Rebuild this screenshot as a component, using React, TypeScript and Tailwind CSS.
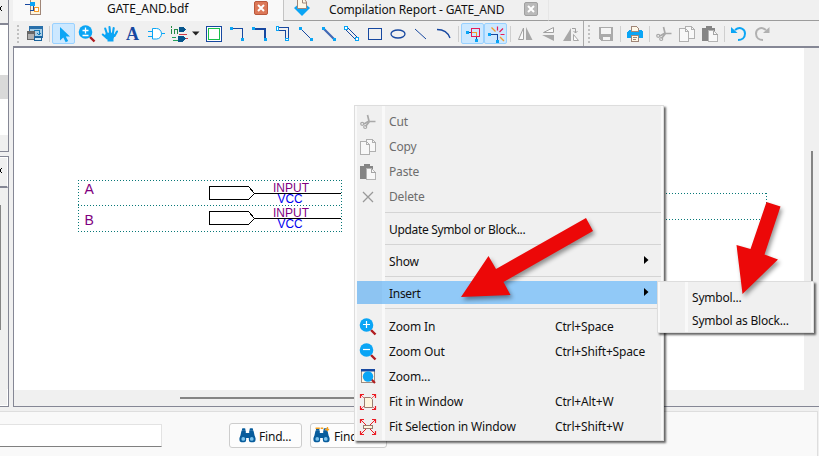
import type { ReactNode } from 'react';

const BLUE = '#0aa5f5';
const NAVY = '#1748a0';

function Icon({ children, crisp = true, className = 'h-5 w-5' }: { children: ReactNode; crisp?: boolean; className?: string }) {
  return (
    <svg viewBox="0 0 20 20" className={`${className} shrink-0`} fill="none" shapeRendering={crisp ? 'crispEdges' : 'auto'}>
      {children}
    </svg>
  );
}

function Cell({ children, active = false }: { children: ReactNode; active?: boolean }) {
  return (
    <div className={`flex h-[21px] w-[23px] shrink-0 items-center justify-center ${active ? 'rounded-[2px] border border-[#99d1ff] bg-[#cce8ff]' : ''}`}>
      {children}
    </div>
  );
}

function Sep() {
  return (
    <div className="flex w-[6px] shrink-0 justify-center">
      <div className="h-4 w-px bg-[#cfcfcf]" />
    </div>
  );
}

function Dots() {
  return (
    <svg viewBox="0 0 3 20" className="h-5 w-[3px] shrink-0" shapeRendering="crispEdges">
      {[1, 5, 9, 13, 17].map((y) => (
        <rect key={y} x="0" y={y} width="2" height="2" fill="#c0c0c0" />
      ))}
    </svg>
  );
}

function Magnifier({ sign }: { sign: string }) {
  return (
    <Icon crisp={false}>
      <path d="M13 13 17.500 17.500" stroke="#b01c20" strokeWidth="2.400" />
      <circle cx="8.500" cy="8" r="6.800" fill={BLUE} />
      {sign === '+' && <path d="M5 7.500h7M8.500 4v7" stroke="#fff" strokeWidth="1.200" />}
      {sign === '-' && <path d="M5 7.500h7" stroke="#fff" strokeWidth="1.200" />}
      {sign === '±' && <path d="M5.500 6.500h6M8.500 3.500v6M5.500 11.500h6" stroke="#fff" strokeWidth="1.300" />}
    </Icon>
  );
}

function Scissors() {
  return (
    <Icon crisp={false}>
      <path d="m9.500 3 1.500 6-5 3M17.500 9.500h-6L7.500 14.500" stroke="#a9a9a9" strokeWidth="1.700" />
      <circle cx="4.200" cy="11.800" r="1.500" stroke="#a9a9a9" strokeWidth="1.200" />
      <circle cx="7.200" cy="15" r="1.500" stroke="#a9a9a9" strokeWidth="1.200" />
    </Icon>
  );
}

function CopyIcon() {
  return (
    <Icon>
      <path d="M8.500 2.500h6l3 3v9h-9z" fill="#f8f8f8" stroke="#b0b0b0" />
      <path d="M2.500 4.500h6l3 3v10h-9z" fill="#f8f8f8" stroke="#b0b0b0" />
      <path d="M8.500 4.500v3h3M14.500 2.500v3h3" stroke="#b0b0b0" />
    </Icon>
  );
}

function PasteIcon() {
  return (
    <Icon>
      <path d="M2 4h4V2h6v2h3v13H2z" fill="#858585" />
      <path d="M8.500 6.500h5l4 4v7h-9z" fill="#f8f8f8" stroke="#b4b4b4" />
      <path d="M13.500 6.500v4h4" stroke="#a5a5a5" />
    </Icon>
  );
}

function FitIcon({ small = false }: { small?: boolean }) {
  return (
    <Icon crisp={false}>
      <path d="m2.500 2.500 4 4M17.500 2.500l-4 4M2.500 17.500l4-4M17.500 17.500l-4-4" stroke="#ec1c24" strokeDasharray={small ? undefined : '3 1'} />
      <path d="M2.500 6V2.500H6M14 2.500h3.500V6M2.500 14v3.500H6M14 17.500h3.500V14" stroke="#ec1c24" strokeWidth="1.200" />
      {small ? (
        <>
          <path d="m5 5 3 3M15 5l-3 3M5 15l3-3M15 15l-3-3" stroke="#ec1c24" />
          <rect x="5.500" y="8.500" width="9" height="3" fill="#fff8e0" stroke="#9a7c70" />
        </>
      ) : (
        <path d="M6.500 5.500h6l2 2v8h-8z" fill="#fff5dc" stroke="#9a7c70" />
      )}
    </Icon>
  );
}

function ZoomAreaIcon() {
  return (
    <Icon crisp={false}>
      <rect x="3.500" y="3.500" width="13" height="12" fill="#fff8e8" stroke="#a08c80" />
      <rect x="3" y="2" width="14" height="2.500" fill="#1748a0" />
      <path d="m13 12 4 4" stroke="#b01c20" strokeWidth="2.200" />
      <circle cx="10" cy="9.500" r="5.200" fill={BLUE} />
    </Icon>
  );
}

function Binoculars({ spark = false }: { spark?: boolean }) {
  return (
    <Icon crisp={false} className="h-[17px] w-[17px]">
      <path d="M3 4h5v3h4V4h5l2 9v4h-7v-4H8v4H1v-4z" fill="#075c9c" />
      <circle cx="4.500" cy="14" r="4" fill="#075c9c" />
      <circle cx="15.500" cy="14" r="4" fill="#075c9c" />
      <rect x="3.500" y="1.500" width="4" height="3" rx="1" fill="#075c9c" />
      <rect x="12.500" y="1.500" width="4" height="3" rx="1" fill="#075c9c" />
      <circle cx="5" cy="14" r="2.200" fill="#7cc4ee" />
      <circle cx="15" cy="14" r="2.200" fill="#7cc4ee" />
      {spark && <path d="M3 1.500h9M14 3h6M17 0v6" stroke="#f5a020" strokeWidth="1.600" strokeDasharray="5 1" />}
    </Icon>
  );
}

function Toolbar() {
  return (
    <div className="flex h-[25px] shrink-0 items-center bg-[#f0f0f0] pl-1">
      <Dots />
      <div className="w-[3px]" />
      <Cell>
        <Icon>
          <rect x="4" y="2" width="14" height="12" fill="#2a70aa" />
          <rect x="5" y="5" width="12" height="8" fill="#a9cfe6" />
          <rect x="2" y="7" width="8" height="9" fill="#666" />
          <rect x="3" y="10" width="6" height="5" fill="#b0b0b0" />
          <path d="M9 6.500h5v4M12 9l2 2 2-2" stroke="#167bb5" />
          <rect x="9" y="12" width="8" height="5" fill="#1b639c" />
          <rect x="10" y="14" width="6" height="2" fill="#d4edf8" />
        </Icon>
      </Cell>
      <Sep />
      <Cell active>
        <Icon crisp={false}>
          <path d="M6 3v13.500l3.300-3 2.400 4.700 2.500-1.200-2.400-4.500h4.200z" fill={BLUE} />
        </Icon>
      </Cell>
      <Cell><Magnifier sign="±" /></Cell>
      <Cell>
        <Icon crisp={false}>
          <path d="M5.200 4.500 7 10M9.500 3l.7 7M13.700 4l-.9 6M17 7.500 14.500 12M2.800 10.500l4.500 4" stroke={BLUE} strokeWidth="2.100" strokeLinecap="round" />
          <path d="M6 9c3-1 6-1 9 1.500L13.500 15v2.500h-6V15L4.500 12z" fill={BLUE} />
        </Icon>
      </Cell>
      <Cell>
        <span className="mt-px font-['Liberation_Serif',serif] text-[18px] leading-none font-bold text-[#1748a0]">A</span>
      </Cell>
      <Cell>
        <Icon>
          <path d="M2 7.500h5M2 12.500h5M15 9.500h4" stroke={BLUE} />
          <path d="M6.500 4.500h4c3 0 5 2.500 5 5.250s-2 5.250-5 5.250h-4z" stroke={BLUE} fill="#fff" shapeRendering="auto" />
        </Icon>
      </Cell>
      <Cell>
        <Icon>
          <path d="M2.500 5v5M2.500 2v2M5.500 10V5.500h3V10" stroke="#238a45" />
          <path d="M10 3h4l3 2-3 3h-4zM9 12h5l3 2.500-3 3H9z" fill="#07558c" />
          <path d="M3 13.500h4M4 16.500h5" stroke="#23a05a" />
          <path d="M10 10.500h8M17 14.500h2" stroke="#d63c48" />
        </Icon>
      </Cell>
      <svg viewBox="0 0 12 8" className="h-2 w-3 shrink-0"><path d="M2 1.500h7.500L5.750 5.500z" fill="#222" /></svg>
      <Cell>
        <Icon>
          <rect x="2.500" y="2.500" width="15" height="15" fill="#fff" stroke={NAVY} />
          <rect x="4.500" y="4.500" width="11" height="11" stroke="#18c048" />
        </Icon>
      </Cell>
      <Cell>
        <Icon>
          <path d="M4 4.500h11.500V16" stroke={NAVY} />
          <path d="M3 3h3v3H3zM14 14h3v3h-3z" fill={BLUE} />
        </Icon>
      </Cell>
      <Cell>
        <Icon>
          <path d="M4 5h11v11" stroke={NAVY} strokeWidth="2" />
          <path d="M2 3h3v3H2zM14 14h3v3h-3z" fill={BLUE} />
        </Icon>
      </Cell>
      <Cell>
        <Icon>
          <path d="M5 3.500h10.500V14M5 6.500h7.500V15" stroke={NAVY} />
          <path d="M3.500 2.500h2v4h-2zM12.500 14.500h3v2h-3z" stroke={BLUE} fill="#fff" />
        </Icon>
      </Cell>
      <Cell>
        <Icon>
          <path d="m4 4 11 11" stroke={NAVY} shapeRendering="auto" />
          <path d="M3 3h3v3H3zM14 14h3v3h-3z" fill={BLUE} />
        </Icon>
      </Cell>
      <Cell>
        <Icon>
          <path d="m4 4 11 11" stroke="#4068b4" strokeWidth="2.200" shapeRendering="auto" />
          <path d="M3 3h3v3H3zM14 14h3v3h-3z" fill={BLUE} />
        </Icon>
      </Cell>
      <Cell>
        <Icon>
          <path d="m3 5 11 11M5 3l11 11" stroke={NAVY} shapeRendering="auto" />
          <path d="M2.500 2.500h3v3h-3zM13.500 13.500h3v3h-3z" stroke={BLUE} fill="#fff" />
        </Icon>
      </Cell>
      <Cell><Icon><rect x="3.500" y="4.500" width="13" height="11" stroke={NAVY} /></Icon></Cell>
      <Cell><Icon crisp={false}><ellipse cx="10" cy="10" rx="7" ry="4" stroke={NAVY} strokeWidth="1.300" /></Icon></Cell>
      <Cell><Icon crisp={false}><path d="m4 5 11 10" stroke={NAVY} /></Icon></Cell>
      <Cell><Icon crisp={false}><path d="M3 5.500c6 0 11 3 13 8.500" stroke={NAVY} strokeWidth="1.300" /></Icon></Cell>
      <Sep />
      <Cell active>
        <Icon>
          <path d="M3 8.500h10.500V16" stroke={NAVY} />
          <path d="M8.500 4.500h8v8h-8z" stroke="#e71c58" strokeWidth="1.500" />
          <path d="M9 8.500h4.500V12" stroke="#f59b28" />
          <path d="M3 7h3v3H3zM12 15h3v3h-3z" fill={BLUE} />
        </Icon>
      </Cell>
      <Cell active>
        <Icon>
          <path d="M3 10.500h8.500V17" stroke={NAVY} strokeWidth="1.500" />
          <g shapeRendering="auto">
            <path d="M11.500 2.500v4M14.500 10.500h4M13.500 8l3.500-3.500" stroke="#e71c58" strokeWidth="1.200" />
            <path d="M14 13l4 4M5.500 3.500l4 4" stroke="#f59b28" strokeWidth="1.300" />
          </g>
          <path d="M2 9h3v3H2zM10 16h3v3h-3z" fill={BLUE} />
        </Icon>
      </Cell>
      <Sep />
      <Cell>
        <Icon crisp={false}>
          <path d="M8.500 4v11.500h-5z" fill="#fafafa" stroke="#a0a0a0" />
          <path d="M11 3v13h6.500z" fill="#a8a8a8" />
        </Icon>
      </Cell>
      <Cell>
        <Icon crisp={false}>
          <path d="M15.500 3.500v5h-10z" fill="#fafafa" stroke="#a0a0a0" />
          <path d="M4 11h12v6z" fill="#a8a8a8" />
        </Icon>
      </Cell>
      <Cell>
        <Icon crisp={false}>
          <path d="M10 4v13H2z" fill="#a8a8a8" />
          <path d="M12.500 10.500v6h5z" fill="#fafafa" stroke="#a8a8a8" />
          <path d="M11 4.500h3.500V9m-2-2 2 2 2-2" stroke="#a0a0a0" />
        </Icon>
      </Cell>
      <div className="ml-px h-[25px] w-px bg-[#aaaaaa]" />
      <div className="w-1" />
      <Dots />
      <div className="w-[3px]" />
      <Cell>
        <Icon>
          <path d="M3 3h14v14H5l-2-2z" fill="#ababab" />
          <path d="M5 4h10v6H5zM7 13h7v3H7z" fill="#f5f5f5" />
        </Icon>
      </Cell>
      <Sep />
      <Cell>
        <Icon>
          <path d="M4 6h12l2 2v6H2V8z" fill={BLUE} />
          <path d="M6.500 2.500h5l2 2v3h-7z" fill="#fff8e8" stroke="#a08678" />
          <path d="M6.500 11.500h7v6h-7z" fill="#fff8e8" stroke="#a08678" />
          <path d="M8 13.500h4M8 15.500h3" stroke="#a08678" />
        </Icon>
      </Cell>
      <Sep />
      <Cell><Scissors /></Cell>
      <Cell><CopyIcon /></Cell>
      <Cell><PasteIcon /></Cell>
      <Sep />
      <Cell>
        <Icon crisp={false}>
          <path d="M6 6c5-4 10-1 10 3.500S12.500 16 9 16" stroke={BLUE} strokeWidth="2" />
          <path d="M2 3v6h6.500z" fill={BLUE} />
        </Icon>
      </Cell>
      <Cell>
        <Icon crisp={false}>
          <path d="M14 6C9 2 4 5 4 9.500S7.500 16 11 16" stroke="#b0b0b0" strokeWidth="2" />
          <path d="M17.500 3v6H11z" fill="#b0b0b0" />
        </Icon>
      </Cell>
    </div>
  );
}

function Tabs() {
  return (
    <div className="flex h-[21px] shrink-0 text-[12px] leading-[16px] text-[#111]">
      <div className="flex w-[270px] bg-[#f9f9f9] pl-[11px]">
        <svg viewBox="0 0 20 18" className="h-[18px] w-5" shapeRendering="crispEdges">
          <path d="M6.500-2v16.500h10V-2z" fill="#fff4dc" stroke="#a08678" />
          <path d="M1 4.500h10M5.500 10.500h4M9.500 2v9" stroke={NAVY} />
          <path d="M6 2h5v4H6z" fill={BLUE} />
          <rect x="10.500" y="7.500" width="4" height="4" fill="#fff" stroke="#f59b28" strokeWidth="1.500" />
        </svg>
        <span className="mt-px ml-[63px] w-[82px] text-[12px] whitespace-nowrap">GATE_AND.bdf</span>
        <div className="mt-px ml-[65px] flex h-[14px] w-[14px] items-center justify-center rounded-[2px] border border-[#b9583c] bg-[#dc7858]">
          <svg viewBox="0 0 8 8" className="h-2 w-2"><path d="m1 1 6 6M7 1 1 7" stroke="#fff" strokeWidth="2" /></svg>
        </div>
      </div>
      <div className="flex w-[266px] border-r border-b border-l border-r-[#e6e6e6] border-b-[#9c9c9c] border-l-[#c4c4c4] bg-[#f0f0f0] pl-[9px]">
        <svg viewBox="0 0 18 18" className="h-[18px] w-[18px]">
          <path d="m1 8 8-7 8 7-8 8z" fill={BLUE} />
          <path d="M4.500-2h6l3 4v6.500h-9z" fill="#fff8e8" stroke="#a08678" />
          <path d="M9.500-1v4h4" stroke="#a08678" fill="none" />
        </svg>
        <span className="mt-[2px] ml-[18px] w-[176px] tracking-[-0.15px] whitespace-nowrap">Compilation Report - GATE_AND</span>
        <div className="mt-[2px] ml-[19px] flex h-[14px] w-[14px] items-center justify-center rounded-[2px] border border-[#a0a0a0] bg-[#b9b9b9]">
          <svg viewBox="0 0 8 8" className="h-2 w-2"><path d="m1 1 6 6M7 1 1 7" stroke="#fff" strokeWidth="2" /></svg>
        </div>
      </div>
      <div className="flex-1 border-b border-[#9c9c9c] bg-[#f0f0f0]" />
    </div>
  );
}

function Schematic() {
  return (
    <svg viewBox="14 48 790 342" className="h-[342px] w-[790px]" shapeRendering="crispEdges" fill="none">
      <path d="M78 180.500h264M78 205.500h264M78 231.500h264M78.500 180v52M341.500 180v52M660 193.500h107M660 219.500h107M766.500 193v27" stroke="#087878" strokeDasharray="1 2" />
      {[0, 25].map((dy) => (
        <g key={dy} transform={`translate(0 ${dy})`}>
          <path d="M209.500 186.500h39l6 7-6 6h-39zM254 193.500h87" stroke="#000" />
          <text x="273" y="192" className="fill-[#800080] font-['Liberation_Sans',sans-serif] text-[13.500px]" textLength="36" lengthAdjust="spacingAndGlyphs">INPUT</text>
          <text x="277.500" y="203" className="fill-[#0000f0] font-['Liberation_Sans',sans-serif] text-[13.500px]" textLength="25" lengthAdjust="spacingAndGlyphs">VCC</text>
        </g>
      ))}
      <g className="fill-[#800080] font-['Liberation_Sans',sans-serif] text-[14px]">
        <text x="84.500" y="194">A</text>
        <text x="84.500" y="225">B</text>
      </g>
    </svg>
  );
}

function Item({ icon, label, keys, muted, arrow, active, h = 'h-[25px]', tracking = 'tracking-[-0.15px]' }: { icon?: ReactNode; label: string; keys?: string; muted?: boolean; arrow?: boolean; active?: boolean; h?: string; tracking?: string }) {
  return (
    <div className={`flex shrink-0 items-center ${h} ${tracking} ${active ? 'bg-[linear-gradient(to_right,#8dc4f2_25px,#91c9f7_25px)]' : ''} ${muted ? 'text-[#6d6d6d]' : 'text-[#111]'}`}>
      <div className="flex h-full w-[25px] shrink-0 items-center">
        <div className="ml-px flex">{icon}</div>
      </div>
      <span className="ml-[7px] w-[166px] whitespace-nowrap">{label}</span>
      <span className="whitespace-nowrap">{keys}</span>
      {arrow && <svg viewBox="0 0 5 8" className="mr-[12px] mb-[4px] ml-auto h-2 w-[5px]"><path d="M0 0v8l4.500-4z" fill="#000" /></svg>}
    </div>
  );
}

function MenuSep() {
  return <div className="ml-7 h-px shrink-0 bg-[#d4d4d4]" />;
}

function ContextMenu() {
  return (
    <div className="absolute top-[105px] left-[354px] flex h-[336px] w-[310px] flex-col border border-[#dddddd] bg-[linear-gradient(to_right,#f9f9f9_2px,#f0f0f0_2px,#f0f0f0_27px,#f9f9f9_27px,#f9f9f9_30px,#f0f0f0_30px,#f0f0f0_306px,#f9f9f9_306px)] px-[2px] pt-[3px] text-[12px] shadow-[2px_2px_2px_rgba(0,0,0,0.6)]">
      <Item icon={<Scissors />} label="Cut" muted />
      <Item icon={<CopyIcon />} label="Copy" muted />
      <Item icon={<PasteIcon />} label="Paste" muted />
      <Item icon={<Icon crisp={false}><path d="m5 5 10 10M15 5 5 15" stroke="#999" strokeWidth="1.300" /></Icon>} label="Delete" muted />
      <div className="h-[3px] shrink-0" />
      <MenuSep />
      <Item label="Update Symbol or Block..." h="h-[31px] pt-[3px]" tracking="tracking-[-0.33px]" />
      <MenuSep />
      <Item label="Show" arrow h="h-[31px] pt-[3px]" />
      <MenuSep />
      <div className="h-1 shrink-0" />
      <Item label="Insert" arrow active h="h-[23px] pt-[2px]" tracking="tracking-[-0.3px]" />
      <div className="h-1 shrink-0" />
      <MenuSep />
      <div className="h-[5px] shrink-0" />
      <Item icon={<Magnifier sign="+" />} label="Zoom In" keys="Ctrl+Space" />
      <Item icon={<Magnifier sign="-" />} label="Zoom Out" keys="Ctrl+Shift+Space" />
      <Item icon={<ZoomAreaIcon />} label="Zoom..." />
      <Item icon={<FitIcon />} label="Fit in Window" keys="Ctrl+Alt+W" />
      <Item icon={<FitIcon small />} label="Fit Selection in Window" keys="Ctrl+Shift+W" />
    </div>
  );
}

function SubMenu() {
  return (
    <div className="absolute top-[281px] left-[657px] flex h-[52px] w-[157px] flex-col border border-[#dddddd] bg-[linear-gradient(to_right,#f9f9f9_2px,#f0f0f0_2px,#f0f0f0_27px,#f9f9f9_27px,#f9f9f9_30px,#f0f0f0_30px,#f0f0f0_153px,#f9f9f9_153px)] pt-[4px] pl-[34px] text-[12px] tracking-[-0.2px] text-[#111] shadow-[2px_2px_2px_rgba(0,0,0,0.6)]">
      <div className="flex h-[23px] shrink-0 items-center whitespace-nowrap">Symbol...</div>
      <div className="flex h-[23px] shrink-0 items-center whitespace-nowrap">Symbol as Block...</div>
    </div>
  );
}

function CloseStub() {
  return (
    <svg viewBox="0 0 2 5" className="h-[5px] w-[2px]" shapeRendering="crispEdges">
      <path d="M0 1h1V0h1v1H1v3h1v1H1V4H0z" fill="#000" />
    </svg>
  );
}

function SidePanel() {
  return (
    <div className="flex w-[13px] shrink-0 flex-col">
      <div className="flex h-[152px] w-[9px] flex-col border-r border-b border-[#858795] bg-white">
        <div className="h-[25px] border-b-2 border-[#858795] bg-[#f0f0f0] pt-[6px]">
          <CloseStub />
        </div>
        <div className="h-[50px]" />
        <div className="h-6 bg-[#d9d9d9]" />
        <div className="h-9" />
        <div className="flex-1 bg-[#f0f0f0]" />
      </div>
      <div className="h-1" />
      <div className="flex h-[251px] w-[9px] flex-col border-t border-r border-b border-[#858795] bg-[#f0f0f0]">
        <div className="h-[31px] border-t border-r border-b-2 border-t-white border-r-white border-b-[#858795] pt-[10px]">
          <CloseStub />
        </div>
        <div className="mt-[17px] h-[125px] w-px bg-[#858585]" />
        <div className="flex-1" />
        <div className="h-[17px] border-r border-b border-white" />
      </div>
    </div>
  );
}

function Arrows() {
  return (
    <svg viewBox="0 0 819 456" className="pointer-events-none absolute inset-0 h-[456px] w-[819px] drop-shadow-[2px_3px_2px_rgba(0,0,0,0.4)]" fill="#ec0808">
      <path d="M586 218 593 231 503.500 282 510.500 295 461 297 488.500 256 496 269z" />
      <path d="M766.500 202 780.500 206.500 764.500 254.500 778 259.500 742.500 294 736.500 245 750.500 249z" />
    </svg>
  );
}

export default function App() {
  return (
    <div className="relative flex h-[456px] w-[819px] flex-col overflow-hidden bg-[#f0f0f0] font-['Noto_Sans',sans-serif]">
      <div className="flex h-[411px] shrink-0">
        <SidePanel />
        <div className="flex min-w-0 flex-1 flex-col">
          <Tabs />
          <Toolbar />
          <div className="flex h-[361px] flex-col border-t-2 border-b border-l border-[#858795]">
            <div className="flex h-[342px]">
              <div className="w-[790px] shrink-0 bg-white"><Schematic /></div>
              <div className="flex-1 pt-[103px] pl-[7px]"><div className="h-[180px] w-[2px] bg-[#858585]" /></div>
            </div>
            <div className="flex-1 pt-[7px] pl-[166px]"><div className="h-[2px] w-[430px] bg-[#858585]" /></div>
          </div>
        </div>
      </div>
      <div className="mr-px flex flex-1 border-t border-r border-[#dedede] bg-[#f9f9f9] text-[12px] tracking-[-0.2px] text-[#111]">
        <div className="mt-3 h-[23px] w-[162px] border-t border-r border-b border-[#e3e3e3] border-b-[#808080] bg-white" />
        <div className="mt-[11px] ml-[67px] flex h-[25px] w-[73px] items-center rounded-[3px] border border-[#cdcdcd] bg-[#fdfdfd] pl-[9px]">
          <Binoculars /><span className="mt-[3px] ml-[3px]">Find...</span>
        </div>
        <div className="mt-[11px] ml-2 flex h-[25px] w-[77px] items-center rounded-[3px] border border-[#cdcdcd] bg-[#fdfdfd] pl-[2px]">
          <Binoculars spark /><span className="mt-[3px] ml-1">Find</span>
        </div>
      </div>
      <ContextMenu />
      <SubMenu />
      <Arrows />
    </div>
  );
}
